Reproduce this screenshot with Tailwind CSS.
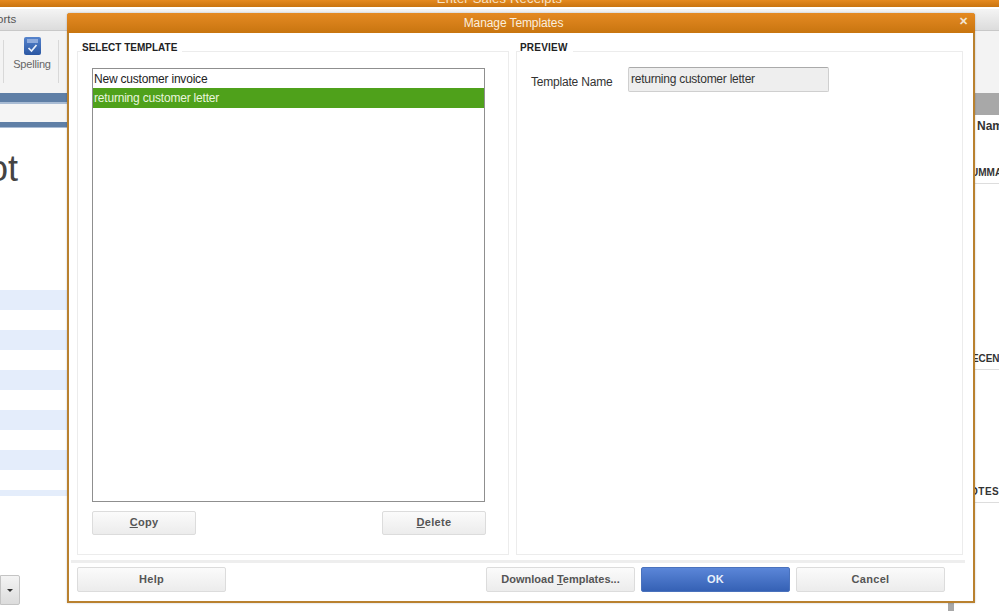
<!DOCTYPE html>
<html>
<head>
<meta charset="utf-8">
<script src="https://cdn.jsdelivr.net/npm/@tailwindcss/browser@4"></script>
</head>
<body class="m-0 overflow-hidden bg-white">
<div class="relative w-[999px] h-[611px] overflow-hidden bg-white font-['Liberation_Sans',Arial,sans-serif] text-[#333]">

  <!-- Background application window -->
  <div class="flex flex-col w-full h-full">
    <div class="h-[7px] shrink-0 bg-gradient-to-b from-[#e58a1f] to-[#c9740f] flex justify-center items-end overflow-hidden">
      <span class="text-[13px] leading-[14px] text-[#f6e3c8] -translate-y-[1px] tracking-[0.2px]">Enter Sales Receipts</span>
    </div>
    <div class="h-[22px] shrink-0 mt-[2px] bg-gradient-to-b from-[#f4f4f4] to-[#dcdcdc] border-b border-[#c8c8c8] text-[11.5px] leading-[21px] text-[#555] flex">
      <span class="-ml-[3px]">orts</span>
    </div>
    <div class="h-[62px] shrink-0 bg-[#f3f3f3] flex items-start">
      <div class="w-[4px] h-[43px] mt-[9px] border-r border-[#d8d8d8]"></div>
      <div class="w-[54px] flex flex-col items-center pt-[6px] pl-[2px]">
        <svg width="17" height="18" viewBox="0 0 17 18">
          <defs><linearGradient id="sp" x1="0" y1="0" x2="0" y2="1"><stop offset="0" stop-color="#5583cc"/><stop offset="1" stop-color="#2b57a3"/></linearGradient></defs>
          <rect x="0" y="0" width="17" height="18" rx="2" fill="url(#sp)"/>
          <rect x="3" y="2" width="11" height="4" fill="#8fabdc"/>
          <path d="M4.5 11 L7.5 14 L12.5 8" fill="none" stroke="#eaf1fb" stroke-width="1.7"/>
        </svg>
        <span class="text-[11px] leading-[13px] mt-[3px] tracking-[-0.2px] text-[#666]">Spelling</span>
      </div>
      <div class="w-px h-[43px] mt-[9px] bg-[#d8d8d8]"></div>
    </div>
    <div class="flex-1 flex justify-between min-h-0">
      <div class="w-[68px] flex flex-col">
        <div class="h-[11px] shrink-0 bg-[#5f7fa6] border-b-[2px] border-[#a9bcd4]"></div>
        <div class="h-[18px] shrink-0 bg-[#f5f5f5]"></div>
        <div class="h-[6px] shrink-0 bg-[#5f7fa6] border-b border-[#a9bcd4]"></div>
        <div class="h-[162px] shrink-0 overflow-hidden pt-[19px]">
          <div class="-ml-[12px] text-[36px] leading-[44px] text-[#444]">ot</div>
        </div>
        <div class="h-[20px] shrink-0 bg-[#e4edfb]"></div>
        <div class="h-[20px] shrink-0 bg-[#e4edfb] mt-[20px]"></div>
        <div class="h-[20px] shrink-0 bg-[#e4edfb] mt-[20px]"></div>
        <div class="h-[20px] shrink-0 bg-[#e4edfb] mt-[20px]"></div>
        <div class="h-[20px] shrink-0 bg-[#e4edfb] mt-[20px]"></div>
        <div class="h-[6px] shrink-0 bg-[#e4edfb] mt-[20px]"></div>
        <div class="mt-[79px] shrink-0 w-[20px] h-[30px] bg-gradient-to-b from-[#f4f4f4] to-[#dcdcdc] border border-[#c4c4c4] rounded-r-[2px] flex items-center justify-center">
          <span class="w-0 h-0 border-x-[3px] border-x-transparent border-t-[3px] border-t-[#333]"></span>
        </div>
      </div>
      <div class="w-[24px] flex flex-col whitespace-nowrap overflow-hidden text-[#333]">
        <div class="h-[22px] shrink-0 bg-[#a8a8a8]"></div>
        <div class="mt-[4px] h-[15px] shrink-0 pl-[2px] text-[12px] leading-[15px] font-bold">Name</div>
        <div class="mt-[32px] h-[18px] shrink-0 border-b border-[#ddd] text-[10px] leading-[14px] font-bold"><span class="-ml-[4px] inline-block">UMMARY</span></div>
        <div class="mt-[168px] h-[18px] shrink-0 border-b border-[#ddd] text-[10px] leading-[14px] font-bold"><span class="-ml-[3px] inline-block tracking-[-0.1px]">ECENT</span></div>
        <div class="mt-[115px] h-[18px] shrink-0 border-b border-[#ddd] text-[10px] leading-[14px] font-bold"><span class="-ml-[5px] inline-block tracking-[0.5px]">OTES</span></div>
      </div>
    </div>
  </div>

  <div class="absolute left-[948px] top-[603px] w-[6px] h-[8px] bg-[#a8a8a8]"></div>

  <!-- Modal dialog -->
  <div class="absolute left-[67px] top-[13px] w-[908px] h-[590px] bg-white border-x-[2px] border-b-[2px] border-[#b9812f] rounded-t-[3px] flex flex-col shadow-[0_0_2px_rgba(0,0,0,0.25)]">
    <div class="relative h-[20px] shrink-0 -mx-[2px] pr-[15px] rounded-t-[3px] bg-gradient-to-b from-[#e58a22] to-[#c8750f] flex items-center justify-center text-[12px] tracking-[-0.1px] text-[#fbeedd]">
      Manage Templates
      <span class="absolute right-[7px] top-[3px] text-[11px] leading-[11px] font-bold text-[#f3e5d2]">✕</span>
    </div>

    <div class="flex-1 flex gap-[7px] pl-[8px] pt-[8px] min-h-0">
      <!-- Select template -->
      <section class="w-[432px] flex flex-col relative">
        <div class="absolute left-[5px] top-0 bg-white pr-[5px] text-[10px] leading-[13px] font-bold text-[#222]">SELECT TEMPLATE</div>
        <div class="mt-[10px] flex-1 border border-[#ececec] flex flex-col pl-[14px] pr-[23px] pt-[16px]">
          <div class="h-[434px] border border-[#8f8f8f] bg-white text-[12px] tracking-[-0.2px]">
            <div class="h-[19px] leading-[20px] px-[1px] text-[#222]">New customer invoice</div>
            <div class="h-[20px] leading-[21px] px-[1px] bg-[#4fa11b] text-[#e9f5dd]">returning customer letter</div>
          </div>
          <div class="flex justify-between mt-[9px] -mr-[1px]">
            <button class="w-[104px] h-[24px] pb-[1px] bg-gradient-to-b from-[#fbfbfb] to-[#ececec] border border-[#dcdcdc] rounded-[2px] text-[11px] font-bold tracking-[0.3px] text-[#555]"><span class="underline">C</span>opy</button>
            <button class="w-[104px] h-[24px] pb-[1px] bg-gradient-to-b from-[#fbfbfb] to-[#ececec] border border-[#dcdcdc] rounded-[2px] text-[11px] font-bold tracking-[0.3px] text-[#555]"><span class="underline">D</span>elete</button>
          </div>
        </div>
      </section>
      <!-- Preview -->
      <section class="w-[447px] flex flex-col relative">
        <div class="absolute left-[4px] top-0 bg-white pr-[5px] text-[10px] leading-[13px] font-bold tracking-[0.2px] text-[#222]">PREVIEW</div>
        <div class="mt-[10px] flex-1 border border-[#ececec] flex items-start pl-[14px] pt-[15px]">
          <span class="w-[97px] mt-[7px] text-[12px] leading-[16px] tracking-[-0.2px] text-[#333]">Template Name</span>
          <div class="w-[201px] h-[25px] bg-[#eeeeee] border border-[#cfcfcf] border-t-[#aaa] rounded-[2px] pl-[2px] text-[12px] leading-[22px] tracking-[-0.25px] text-[#333]">returning customer letter</div>
        </div>
      </section>
    </div>

    <!-- Footer -->
    <div class="h-[41px] shrink-0 mt-[5px] ml-[2px] mr-[8px] border-t-[3px] border-[#eeeeee] flex items-start pt-[4px] pl-[6px] pr-[20px]">
      <button class="w-[149px] h-[25px] bg-gradient-to-b from-[#fbfbfb] to-[#ececec] border border-[#dcdcdc] rounded-[2px] text-[11px] font-bold tracking-[0.3px] text-[#555]">Help</button>
      <button class="ml-auto w-[149px] h-[25px] bg-gradient-to-b from-[#fbfbfb] to-[#ececec] border border-[#dcdcdc] rounded-[2px] text-[11px] font-bold text-[#555]">Download <span class="underline">T</span>emplates...</button>
      <button class="ml-[6px] w-[149px] h-[25px] bg-gradient-to-b from-[#5b86d8] to-[#3561b5] border border-[#4a72bd] rounded-[2px] text-[11px] font-bold tracking-[0.3px] text-[#eaf1fb]">OK</button>
      <button class="ml-[6px] w-[149px] h-[25px] bg-gradient-to-b from-[#fbfbfb] to-[#ececec] border border-[#dcdcdc] rounded-[2px] text-[11px] font-bold tracking-[0.3px] text-[#555]">Cancel</button>
    </div>
  </div>
</div>
</body>
</html>
